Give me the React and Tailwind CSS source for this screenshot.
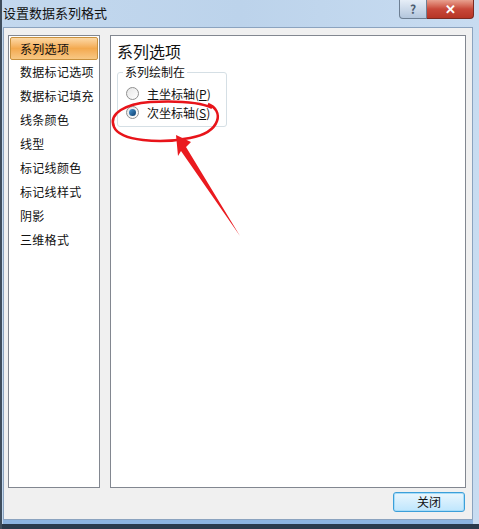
import React from "react";

const items = ["系列选项", "数据标记选项", "数据标记填充", "线条颜色", "线型", "标记线颜色", "标记线样式", "阴影", "三维格式"];

function Radio({ checked }) {
  return (
    <span className="relative inline-flex h-[13px] w-[13px] items-center justify-center rounded-full border border-[#8f8f8f] bg-gradient-to-br from-[#e6e6e6] to-[#ffffff]">
      {checked && <span className="h-[7px] w-[7px] rounded-full bg-gradient-to-br from-[#4a9ad6] to-[#0d3e6e]" />}
    </span>
  );
}

export default function App() {
  return (
    <div className="relative flex h-[529px] w-[479px] flex-col overflow-hidden border-l-[2px] border-[#3f4d5c] bg-gradient-to-r from-[#c3d8ee] via-[#bcd3eb] to-[#c8dcf1] font-['Noto_Sans_CJK_SC',sans-serif] text-black">
      {/* title bar */}
      <div className="flex h-[27px] shrink-0 items-start justify-between">
        <div className="pl-[1px] pt-[4px] text-[13px] leading-[18px] text-[#111]">设置数据系列格式</div>
        <div className="mr-[5px] flex h-[19px]">
          <div className="flex w-[28px] items-center justify-center rounded-bl-[4px] border border-t-0 border-[#6d7f93] bg-gradient-to-b from-[#e6eef7] to-[#b3c6dc] text-[12px] font-bold text-[#4c5d70]">?</div>
          <div className="flex w-[47px] items-center justify-center rounded-br-[4px] border border-l-0 border-t-0 border-[#7a2a22] bg-gradient-to-b from-[#e8a08f] via-[#c8483a] to-[#b63526] text-[13px] font-bold text-white">✕</div>
        </div>
      </div>

      {/* client area */}
      <div className="ml-[1px] mr-[6px] flex h-[493px] shrink-0 flex-col border border-[#8ba3bf] bg-[#f0f0f0]">
        <div className="flex h-[460px] gap-[10px] pl-[4px] pr-[6px] pt-[7px]">
          <div className="flex h-[453px] w-[92px] flex-col border border-[#828790] bg-white p-[1px]">
            {items.map((t, i) => (
              <div
                key={t}
                className={
                  i === 0
                    ? "flex h-[23px] items-center whitespace-nowrap rounded-[2px] border border-[#c9913e] bg-gradient-to-b from-[#fcd9a5] via-[#f3a94e] to-[#f8c884] pl-[9px] text-[12px] tracking-[0.3px] text-[#111]"
                    : "flex h-[24px] items-center whitespace-nowrap pl-[10px] text-[12px] tracking-[0.3px] text-[#111]"
                }
              >
                {t}
              </div>
            ))}
          </div>
          <div className="h-[453px] flex-1 border border-[#828790] bg-white pl-[6px] pt-[5px]">
            <div className="text-[16px] leading-[20px] text-[#111]">系列选项</div>
            <div className="relative mt-[11px] h-[55px] w-[110px] rounded-[3px] border border-[#d5dfe5]">
              <div className="absolute left-[5px] top-[-10px] bg-white px-[2px] text-[12px] leading-[18px] text-[#111]">系列绘制在</div>
              <div className="flex flex-col gap-[4px] pl-[8px] pt-[13px] text-[12px] leading-[15px] text-[#111]">
                <div className="flex items-center gap-[8px]">
                  <Radio />
                  <span>主坐标轴(<u>P</u>)</span>
                </div>
                <div className="flex items-center gap-[8px]">
                  <Radio checked />
                  <span>次坐标轴(<u>S</u>)</span>
                </div>
              </div>
            </div>
          </div>
        </div>
        <div className="flex justify-end pr-[7px] pt-[4px]">
          <button className="h-[20px] w-[72px] rounded-[3px] border border-[#3c9fd9] bg-gradient-to-b from-[#eaf6fd] to-[#bee6fd] text-[12px] text-[#111] shadow-[inset_0_0_0_1px_#a6dcf8]">关闭</button>
        </div>
      </div>
      <div className="ml-[1px] mr-[6px] h-[4px] shrink-0 bg-[#8cb3e0]" />
      <div className="flex-1 bg-[#2a3a4c]" />

      {/* red annotation */}
      <svg className="pointer-events-none absolute left-[-2px] top-0" width="479" height="529" viewBox="0 0 479 529">
        <path
          d="M208 104 C224 110 222 132 190 138 C160 144 120 141 114 127 C108 113 126 104 150 102 C170 101 198 101 212 108"
          fill="none"
          stroke="#e8141a"
          strokeWidth="2.5"
        />
        <polygon points="176,135 191,142 186,147 240,236 181,151 178,156" fill="#ea1a1f" />
      </svg>
    </div>
  );
}
